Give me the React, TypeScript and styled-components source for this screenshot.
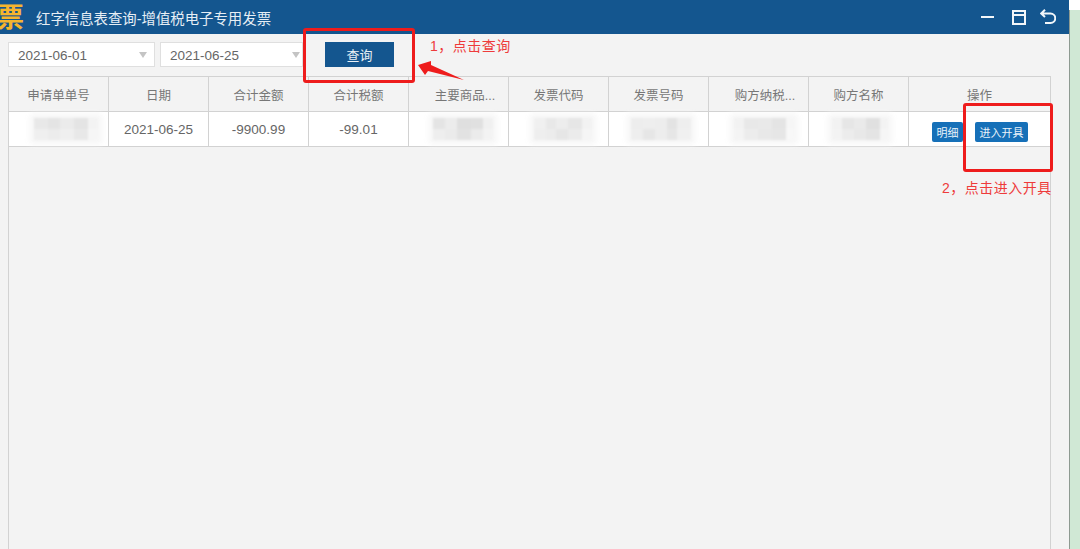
import React from "react";
import styled, { createGlobalStyle } from "styled-components";

const FONT = `"Liberation Sans", "Noto Sans CJK SC", sans-serif`;

type Cell = [number, string, string];

const columns: { title: string; value?: string; nudge?: boolean; shift?: number; patch?: Cell[] }[] = [
  {
    title: "申请单单号",
    shift: 7,
    patch: [[14, "#e8e8e8", "#efefef"], [12, "#e4e4e4", "#ececec"], [14, "#ebebeb", "#efefef"], [14, "#e4e4e4", "#e8e8e8"], [10, "#f3f3f3", "#f6f6f6"]],
  },
  { title: "日期", value: "2021-06-25" },
  { title: "合计金额", value: "-9900.99" },
  { title: "合计税额", value: "-99.01" },
  {
    title: "主要商品...",
    nudge: true,
    shift: 4,
    patch: [[12, "#e4e4e4", "#eeeeee"], [12, "#ececec", "#ebebeb"], [14, "#dfdfdf", "#e2e2e2"], [12, "#e0e0e0", "#ebebeb"], [10, "#f0f0f0", "#f3f3f3"]],
  },
  {
    title: "发票代码",
    shift: 4,
    patch: [[12, "#f0f0f0", "#eeeeee"], [10, "#e8e8e8", "#ececec"], [12, "#ededed", "#e6e6e6"], [14, "#e6e6e6", "#ebebeb"], [10, "#f2f2f2", "#f5f5f5"]],
  },
  {
    title: "发票号码",
    shift: 2,
    patch: [[12, "#ededed", "#eeeeee"], [12, "#eeeeee", "#e6e6e6"], [12, "#ededed", "#ededed"], [10, "#e3e3e3", "#e6e6e6"], [14, "#eeeeee", "#f0f0f0"]],
  },
  {
    title: "购方纳税...",
    nudge: true,
    shift: 5,
    patch: [[10, "#f2f2f2", "#f4f4f4"], [14, "#e8e8e8", "#ececec"], [14, "#e9e9e9", "#e8e8e8"], [14, "#e4e4e4", "#e6e6e6"], [8, "#f6f6f6", "#f8f8f8"]],
  },
  {
    title: "购方名称",
    shift: 1,
    patch: [[10, "#f2f2f2", "#f3f3f3"], [12, "#e6e6e6", "#ececec"], [12, "#eaeaea", "#e8e8e8"], [14, "#e0e0e0", "#e4e4e4"], [8, "#f3f3f3", "#f6f6f6"]],
  },
];

export default function App() {
  return (
    <>
      <GlobalStyle />
      <Page>
        <Window>
          <TitleBar>
            <TitleLeft>
              <Logo>票</Logo>
              <Title>红字信息表查询-增值税电子专用发票</Title>
            </TitleLeft>
            <WindowActions>
              <svg width="17" height="16" viewBox="0 0 17 16">
                <path d="M0 8h13" stroke="#f2f6fa" strokeWidth="2" />
              </svg>
              <svg width="14" height="15" viewBox="0 0 14 15" fill="none" stroke="#f2f6fa" strokeWidth="2">
                <path d="M1 1h12v13H1zM1 5h12" />
              </svg>
              <svg width="16" height="16" viewBox="0 0 16 16" fill="none" stroke="#f2f6fa" strokeWidth="2">
                <path d="M5 0.8L1.2 4.5l3.8 3.5M1.2 4.5h9.3a4.5 4.5 0 0 1 0 9.5H5" />
              </svg>
            </WindowActions>
          </TitleBar>
          <Toolbar>
            <DateField>
              2021-06-01
              <Caret />
            </DateField>
            <DateField $second>
              2021-06-25
              <Caret />
            </DateField>
            <QueryButton>查询</QueryButton>
          </Toolbar>
          <TableArea>
            <HeaderRow>
              {columns.map((col) => (
                <HeaderCell key={col.title} $nudge={col.nudge}>
                  {col.title}
                </HeaderCell>
              ))}
              <HeaderCell $last>操作</HeaderCell>
            </HeaderRow>
            <BodyRow>
              {columns.map((col) => (
                <BodyCell key={col.title}>
                  {col.patch ? (
                    <Patch $shift={col.shift || 0}>
                      {col.patch.map(([w, top, bottom], i) => (
                        <PatchColumn key={i} style={{ width: w }}>
                          <PatchBlock style={{ background: top }} />
                          <PatchBlock style={{ background: bottom }} />
                        </PatchColumn>
                      ))}
                    </Patch>
                  ) : (
                    col.value
                  )}
                </BodyCell>
              ))}
              <ActionCell>
                <SmallButton>明细</SmallButton>
                <SmallButton>进入开具</SmallButton>
              </ActionCell>
            </BodyRow>
          </TableArea>
        </Window>
        <SideStrip />

        <RedBox $x={303} $y={28} $w={112} $h={55} />
        <RedBox $x={963} $y={103} $w={90} $h={69} />
        <Arrow viewBox="0 0 50 30" width="50" height="30">
          <path d="M1 7L14 3L14 7L47 22L11 13L8 17Z" fill="#ee1c1c" />
        </Arrow>
        <Note $x={430} $y={37}>1，点击查询</Note>
        <Note $x={942} $y={179}>2，点击进入开具</Note>
      </Page>
    </>
  );
}

const GlobalStyle = createGlobalStyle`
  html, body {
    margin: 0;
    padding: 0;
    width: 1080px;
    height: 549px;
    overflow: hidden;
    background: #fff;
  }
`;

const Page = styled.div`
  position: relative;
  display: flex;
  width: 1080px;
  height: 549px;
  overflow: hidden;
  font-family: ${FONT};
`;

const Window = styled.div`
  display: flex;
  flex-direction: column;
  width: 1069px;
  height: 549px;
  background: #f3f3f3;
`;

const SideStrip = styled.div`
  width: 10px;
  margin-top: 10px;
  background: #d0e8d5;
  border-left: 1px solid #8d9a91;
`;

const TitleBar = styled.div`
  display: flex;
  align-items: center;
  justify-content: space-between;
  height: 34px;
  flex-shrink: 0;
  padding-right: 13px;
  background: #14568f;
`;

const TitleLeft = styled.div`
  display: flex;
  align-items: center;
  min-width: 0;
`;

const Logo = styled.div`
  width: 24px;
  height: 34px;
  padding-top: 2px;
  box-sizing: border-box;
  overflow: hidden;
  display: flex;
  justify-content: flex-end;
  font-size: 27px;
  font-weight: 700;
  line-height: 32px;
  color: #f5b52e;
`;

const Title = styled.div`
  margin-left: 12px;
  font-size: 14.4px;
  color: #e6eef5;
`;

const WindowActions = styled.div`
  display: flex;
  align-items: center;
  gap: 14px;
`;

const Toolbar = styled.div`
  display: flex;
  align-items: flex-start;
  height: 42px;
  flex-shrink: 0;
  padding: 8px 0 0 8px;
  box-sizing: border-box;
`;

const DateField = styled.div<{ $second?: boolean }>`
  display: flex;
  align-items: center;
  justify-content: space-between;
  box-sizing: border-box;
  width: ${(p) => (p.$second ? "143px" : "147px")};
  height: 25px;
  margin-left: ${(p) => (p.$second ? "5px" : "0")};
  padding: 1px ${(p) => (p.$second ? "2px" : "7px")} 0 9px;
  background: #fff;
  border: 1px solid #dfdfdf;
  font-size: 13.5px;
  color: #666;
`;

const Caret = styled.span`
  width: 0;
  height: 0;
  border-left: 4.5px solid transparent;
  border-right: 4.5px solid transparent;
  border-top: 6px solid #c4c4c4;
`;

const QueryButton = styled.button`
  width: 69px;
  height: 25px;
  margin-left: 22px;
  padding: 0;
  border: 0;
  background: #14568f;
  color: #e8f0f6;
  font-family: ${FONT};
  font-size: 13px;
`;

const TableArea = styled.div`
  box-sizing: border-box;
  width: 1043px;
  flex: 1;
  margin-left: 8px;
  border-left: 1px solid #d2d2d2;
  border-right: 1px solid #d2d2d2;
  border-top: 1px solid #d2d2d2;
`;

const rowGrid = `
  display: grid;
  grid-template-columns: repeat(9, 100px) 1fr;
`;

const HeaderRow = styled.div`
  ${rowGrid}
  height: 35px;
  box-sizing: border-box;
  border-bottom: 1px solid #d2d2d2;
`;

const HeaderCell = styled.div<{ $last?: boolean; $nudge?: boolean }>`
  display: flex;
  align-items: center;
  justify-content: center;
  padding-left: ${(p) => (p.$nudge ? "13px" : "0")};
  border-right: ${(p) => (p.$last ? "0" : "1px solid #d2d2d2")};
  font-size: 12.5px;
  color: #777;
  white-space: nowrap;
`;

const BodyRow = styled.div`
  ${rowGrid}
  height: 35px;
  box-sizing: border-box;
  background: #fff;
  border-bottom: 1px solid #d2d2d2;
`;

const BodyCell = styled.div`
  display: flex;
  align-items: center;
  justify-content: center;
  border-right: 1px solid #d2d2d2;
  font-size: 13.5px;
  color: #666;
`;

const Patch = styled.div<{ $shift: number }>`
  display: flex;
  height: 22px;
  margin-left: ${(p) => p.$shift * 2}px;
  filter: blur(0.8px);
  box-shadow: 0 0 6px 4px #f6f6f6;
`;

const PatchColumn = styled.div`
  display: flex;
  flex-direction: column;
`;

const PatchBlock = styled.div`
  flex: 1;
`;

const ActionCell = styled.div`
  display: flex;
  align-items: center;
  justify-content: flex-start;
  gap: 12px;
  padding: 6px 0 0 23px;
`;

const SmallButton = styled.button`
  height: 20px;
  padding: 0 4.5px;
  border: 0;
  border-radius: 2px;
  background: #1670b8;
  color: #eaf3fa;
  font-family: ${FONT};
  font-size: 11px;
  white-space: nowrap;
`;

const RedBox = styled.div<{ $x: number; $y: number; $w: number; $h: number }>`
  position: absolute;
  left: ${(p) => p.$x}px;
  top: ${(p) => p.$y}px;
  width: ${(p) => p.$w}px;
  height: ${(p) => p.$h}px;
  box-sizing: border-box;
  border: 3px solid #ee1c1c;
  border-radius: 3px;
`;

const Arrow = styled.svg`
  position: absolute;
  left: 417px;
  top: 58px;
`;

const Note = styled.div<{ $x: number; $y: number }>`
  position: absolute;
  left: ${(p) => p.$x}px;
  top: ${(p) => p.$y}px;
  font-size: 14px;
  line-height: 18px;
  letter-spacing: 0.5px;
  color: #ee3b3b;
  white-space: nowrap;
`;
